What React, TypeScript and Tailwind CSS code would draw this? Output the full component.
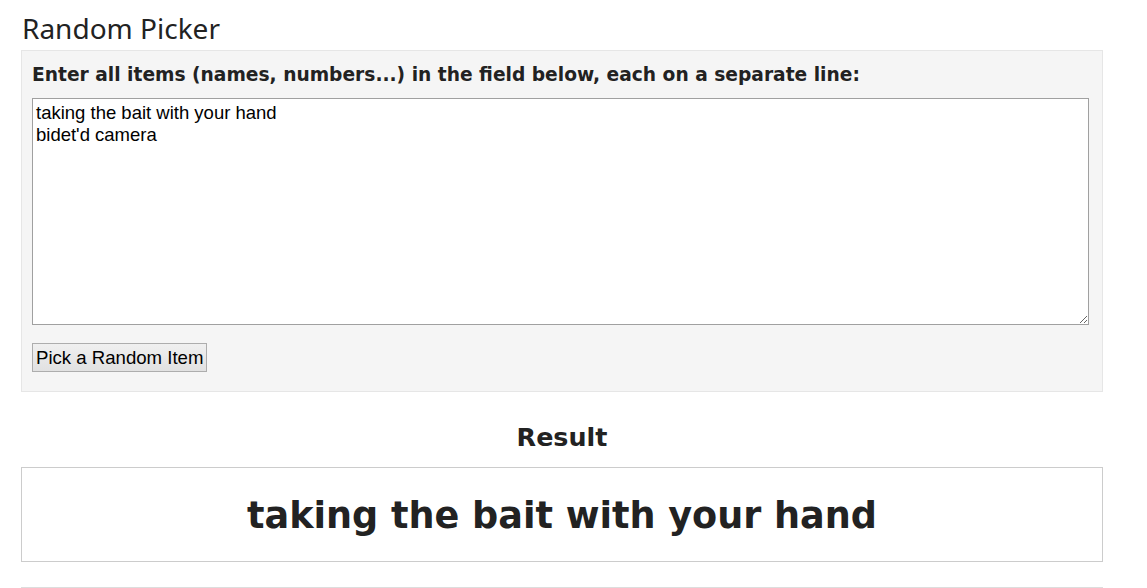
export default function App() {
  return (
    <div className="min-h-[588px] bg-white pl-[21px] pr-[44px] pt-[10px] text-[#222]">
      <h1 className="mb-[4px] pl-[1px] font-['Noto_Sans',sans-serif] text-[28px] leading-[36px] text-[#222]">
        Random Picker
      </h1>

      <div className="border border-[#e6e6e6] bg-[#f5f5f5] pb-[19px] pl-[10px] pr-[13px] pt-[12px]">
        <label className="block font-['DejaVu_Sans',sans-serif] text-[18.65px] font-bold leading-[24px] text-[#222]">
          Enter all items (names, numbers...) in the field below, each on a separate line:
        </label>
        <textarea
          className="mt-[11px] block h-[227px] w-full resize-y border border-[#a0a0a0] bg-white px-[3px] pb-[2px] pt-[3px] font-['Liberation_Sans',Arial,sans-serif] text-[18.5px] leading-[22px] text-black outline-none"
          defaultValue={"taking the bait with your hand\nbidet'd camera"}
        />
        <button className="mt-[18px] h-[29px] border border-[#adadad] bg-gradient-to-b from-[#f0f0f0] to-[#e1e1e1] px-[3px] font-['Liberation_Sans',Arial,sans-serif] text-[18.6px] leading-[20px] text-black">
          Pick a Random Item
        </button>
      </div>

      <h2 className="mt-[29px] text-center font-['DejaVu_Sans',sans-serif] text-[25.4px] font-bold leading-[32px] text-[#222]">
        Result
      </h2>

      <div className="mt-[14px] flex h-[95px] items-center justify-center border border-[#cccccc] bg-white pt-[2px]">
        <div className="font-['DejaVu_Sans',sans-serif] text-[36.6px] font-bold leading-[44px] text-[#222]">
          taking the bait with your hand
        </div>
      </div>

      <div className="mt-[25px] border-t border-[#dddddd]" />
    </div>
  );
}
